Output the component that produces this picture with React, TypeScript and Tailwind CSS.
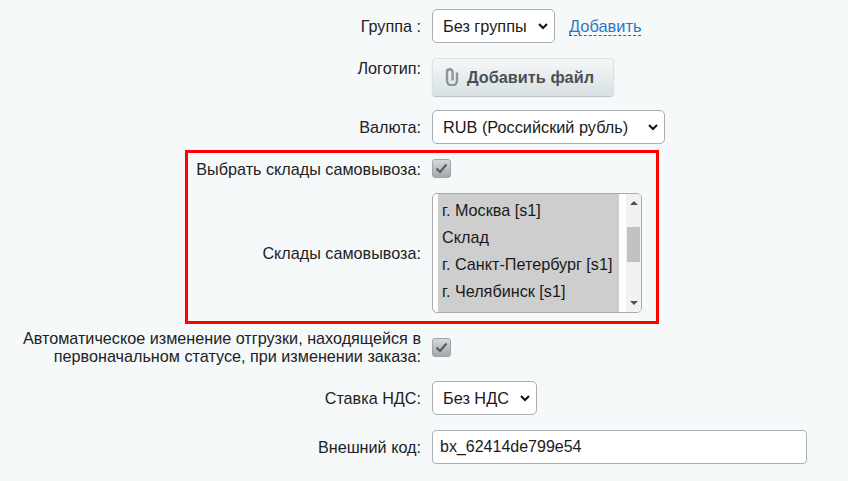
import React from "react";

const font = { fontFamily: '"Liberation Sans", Arial, sans-serif' };

const Chevron = () => (
  <svg width="12" height="8" viewBox="0 0 12 8" className="shrink-0">
    <path d="M2 2l4 4 4-4" fill="none" stroke="#111" strokeWidth="2" />
  </svg>
);

const Select = ({ text, width }: { text: string; width: string }) => (
  <div className={`flex h-[34px] items-center justify-between rounded-[5px] border border-[#a9adb0] bg-white pl-[10px] pr-[5px] text-[16.3px] text-[#1a1a1a] ${width}`}>
    <span className="whitespace-nowrap">{text}</span>
    <Chevron />
  </div>
);

const Check = () => (
  <div className="flex h-[19px] w-[19px] items-center justify-center rounded-[3px] border border-[#a0a4a7] bg-gradient-to-b from-[#d6d9da] to-[#a3a7aa]">
    <svg width="13" height="11" viewBox="0 0 13 11">
      <path d="M1.500 5.500l3.500 3.500 6.500-7.500" fill="none" stroke="#55595c" strokeWidth="2" />
    </svg>
  </div>
);

const Label = ({ children, width = "w-[421px]" }: { children: React.ReactNode; width?: string }) => (
  <div className={`shrink-0 whitespace-nowrap text-right text-[16.2px] leading-[18px] text-[#222] ${width}`}>{children}</div>
);

const stores = ["г. Москва [s1]", "Склад", "г. Санкт-Петербург [s1]", "г. Челябинск [s1]"];

export default function App() {
  return (
    <div className="h-[481px] w-[848px] overflow-hidden bg-[#f5f9fa] pt-[9px]" style={font}>
      <div className="flex h-[34px] items-center gap-[11px]">
        <Label>Группа :</Label>
        <Select text="Без группы" width="w-[123px]" />
        <a className="ml-[3px] border-b border-dashed border-[#2067b0] text-[16.4px] leading-[18px] text-[#2d77c4]">Добавить</a>
      </div>

      <div className="mt-[15px] flex h-[38px] items-start gap-[11px]">
        <div className="pt-[1px]">
          <Label>Логотип:</Label>
        </div>
        <div className="flex h-[38px] w-[182px] items-center gap-[8px] rounded-[4px] border border-[#dde3e5] bg-gradient-to-b from-[#f5f8f8] to-[#d9e1e3] pl-[12px] shadow-[0_1px_1px_#b5bdc0]">
          <svg width="14" height="18" viewBox="0 0 14 18" className="-mt-[1px]">
            <path d="M12 4.500v8a5 5 0 0 1-10 0V4a2.800 2.800 0 0 1 5.600 0v8.500" fill="none" stroke="#8d9396" strokeWidth="2.400" />
          </svg>
          <span className="whitespace-nowrap text-[16.3px] font-bold text-[#4b5054]">Добавить файл</span>
        </div>
      </div>

      <div className="mt-[14px] flex h-[34px] items-center gap-[11px]">
        <Label>Валюта:</Label>
        <Select text="RUB (Российский рубль)" width="w-[233px]" />
      </div>

      <div className="ml-[185px] mt-[6px] h-[174px] w-[474px] border-[3px] border-[#ff0000]">
        <div className="mt-[6px] flex h-[19px] items-center gap-[11px]">
          <Label width="w-[233px]">Выбрать склады самовывоза:</Label>
          <Check />
        </div>
        <div className="mt-[15px] flex items-center gap-[11px]">
          <Label width="w-[233px]">Склады самовывоза:</Label>
          <div className="flex h-[120px] w-[210px] overflow-hidden rounded-[5px] border border-[#a9adb0] bg-white">
            <div className="ml-[5px] flex w-[181px] flex-col bg-[#cecece] pl-[4px] pt-[3px] text-[16.2px] text-[#1a1a1a]">
              {stores.map((s) => (
                <div key={s} className="flex h-[27px] items-center whitespace-nowrap">{s}</div>
              ))}
            </div>
            <div className="ml-[7px] flex w-[15px] flex-col items-center bg-[#f1f1f1] py-[7px]">
              <div className="h-0 w-0 border-x-[4px] border-b-[4px] border-x-transparent border-b-[#505050]" />
              <div className="mt-[22px] h-[35px] w-[13px] bg-[#c1c1c1]" />
              <div className="mt-auto h-0 w-0 border-x-[4px] border-t-[4px] border-x-transparent border-t-[#505050]" />
            </div>
          </div>
        </div>
      </div>

      <div className="mt-[5px] flex items-center gap-[11px]">
        <Label>
          Автоматическое изменение отгрузки, находящейся в
          <br />
          первоначальном статусе, при изменении заказа:
        </Label>
        <Check />
      </div>

      <div className="mt-[16px] flex h-[34px] items-center gap-[11px]">
        <Label>Ставка НДС:</Label>
        <Select text="Без НДС" width="w-[105px]" />
      </div>

      <div className="mt-[15px] flex h-[34px] items-center gap-[11px]">
        <Label>Внешний код:</Label>
        <div className="flex h-[34px] w-[375px] items-center rounded-[4px] border border-[#a9b1b8] bg-white pl-[7px] text-[16px] text-[#1a1a1a]">bx_62414de799e54</div>
      </div>
    </div>
  );
}
